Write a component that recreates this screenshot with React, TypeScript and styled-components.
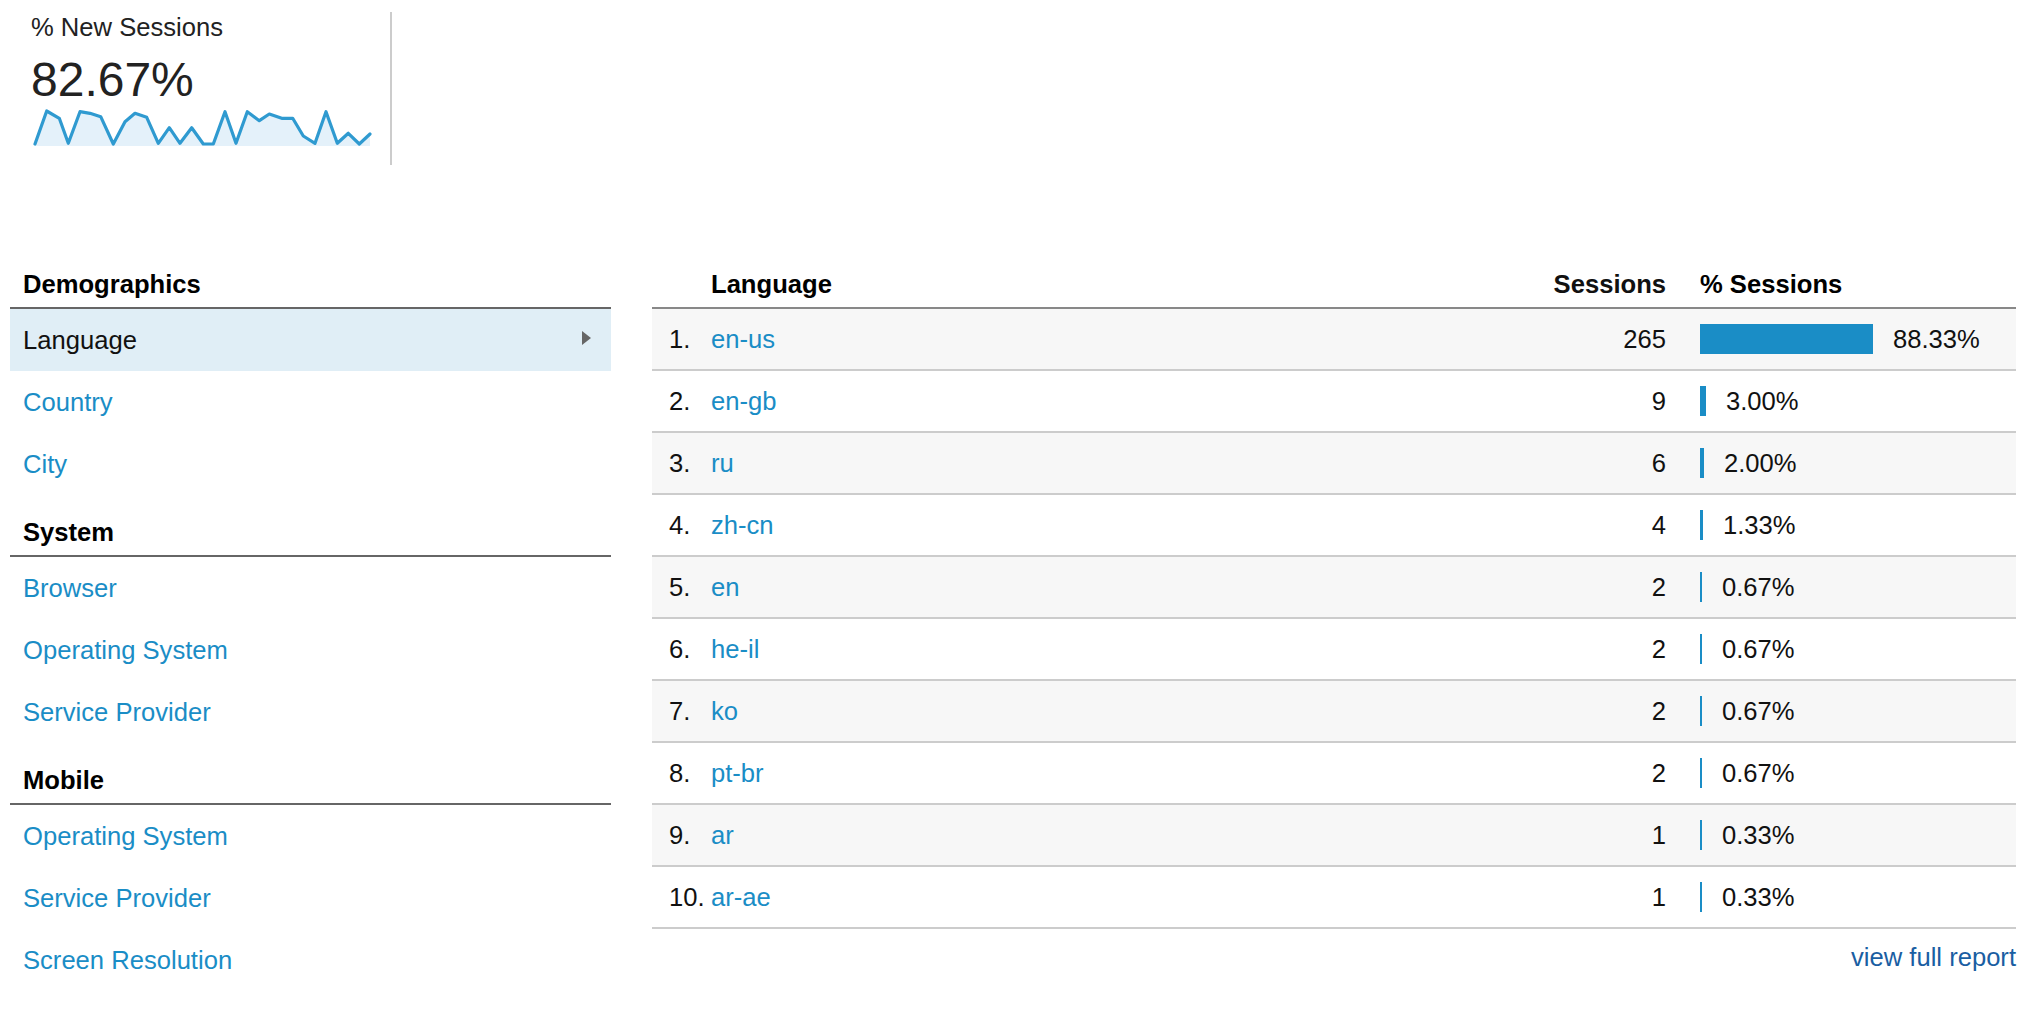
import React from "react";
import styled, { createGlobalStyle } from "styled-components";

const GlobalStyle = createGlobalStyle`
  html, body {
    margin: 0;
    padding: 0;
    background: #ffffff;
  }
  body {
    font-family: "Liberation Sans", Arial, sans-serif;
    font-size: 25.6px;
    color: #222222;
  }
  * { box-sizing: border-box; }
`;

const Page = styled.div`
  width: 2030px;
  min-height: 1018px;
`;

const MetricCard = styled.div`
  width: 392px;
  margin-top: 12px;
  padding: 0 0 17px 31px;
  border-right: 2px solid #cccccc;
`;

const MetricTitle = styled.div`
  font-size: 25.6px;
  line-height: 30px;
  color: #222222;
`;

const MetricValue = styled.div`
  margin-top: 13px;
  font-size: 48px;
  line-height: 50px;
  color: #222222;
`;

const Spark = styled.svg`
  display: block;
  margin: 3px 0 0 2px;
`;

const Main = styled.div`
  display: flex;
  align-items: flex-start;
  gap: 41px;
  margin-top: 82px;
  padding-left: 10px;
`;

const SidePanel = styled.div`
  flex: 0 0 601px;
  width: 601px;
`;

const SectionHeader = styled.div`
  padding: 22px 0 8px 13px;
  line-height: 30px;
  font-weight: bold;
  color: #000000;
  border-bottom: 2px solid #666666;
`;

const NavRow = styled.div<{ $active?: boolean }>`
  display: flex;
  align-items: center;
  justify-content: space-between;
  height: 62px;
  padding: 0 20px 1px 13px;
  line-height: 30px;
  background: ${(p) => (p.$active ? "#e0eef6" : "transparent")};
  color: ${(p) => (p.$active ? "#111111" : "#1a8dc6")};
  cursor: pointer;
`;

const Caret = styled.span`
  width: 0;
  height: 0;
  border-left: 9px solid #666666;
  border-top: 7.5px solid transparent;
  border-bottom: 7.5px solid transparent;
  margin-top: -4px;
`;

const TableWrap = styled.div`
  flex: 0 0 1364px;
  width: 1364px;
`;

const GridRow = styled.div<{ $shade?: boolean }>`
  display: grid;
  grid-template-columns: 42px 1fr 150px 316px;
  align-items: center;
  padding-left: 17px;
  line-height: 30px;
  background: ${(p) => (p.$shade ? "#f7f7f7" : "#ffffff")};
`;

const HeadRow = styled(GridRow)`
  padding-top: 22px;
  padding-bottom: 8px;
  font-weight: bold;
  color: #000000;
  border-bottom: 2px solid #888888;
`;

const BodyRow = styled(GridRow)`
  height: 62px;
  border-bottom: 2px solid #cccccc;
`;

const Rank = styled.span`
  color: #111111;
`;

const LangLink = styled.a`
  color: #1a8dc6;
  text-decoration: none;
`;

const NumCell = styled.div`
  text-align: right;
  padding-right: 34px;
  color: #111111;
`;

const PctCell = styled.div`
  display: flex;
  align-items: center;
  gap: 20px;
  color: #111111;
`;

const Bar = styled.span`
  display: block;
  height: 30px;
  background: #1a8dc6;
`;

const Footer = styled.div`
  display: flex;
  justify-content: flex-end;
  margin-top: 13px;
  line-height: 30px;
`;

const ReportLink = styled.a`
  color: #1a5ea2;
  text-decoration: none;
`;

const sections = [
  { title: "Demographics", items: ["Language", "Country", "City"], active: 0 },
  { title: "System", items: ["Browser", "Operating System", "Service Provider"], active: -1 },
  { title: "Mobile", items: ["Operating System", "Service Provider", "Screen Resolution"], active: -1 },
];

const rows = [
  { lang: "en-us", sessions: 265, pct: 88.33 },
  { lang: "en-gb", sessions: 9, pct: 3.0 },
  { lang: "ru", sessions: 6, pct: 2.0 },
  { lang: "zh-cn", sessions: 4, pct: 1.33 },
  { lang: "en", sessions: 2, pct: 0.67 },
  { lang: "he-il", sessions: 2, pct: 0.67 },
  { lang: "ko", sessions: 2, pct: 0.67 },
  { lang: "pt-br", sessions: 2, pct: 0.67 },
  { lang: "ar", sessions: 1, pct: 0.33 },
  { lang: "ar-ae", sessions: 1, pct: 0.33 },
];

const sparkPts: [number, number][] = [
  [2, 36], [13.7, 3], [26.3, 10.3], [35.3, 35.3], [47, 3.7], [57, 5.3], [67.7, 8.7],
  [80.3, 36], [92, 13.7], [102, 5.3], [113.7, 9.3], [125.3, 35.3], [136.3, 19.7],
  [147, 35.3], [158.7, 19.7], [170.3, 36], [180.3, 36], [192, 3.7], [203, 35.3],
  [214.3, 3.7], [226.3, 12.7], [236.3, 6], [248.7, 10.3], [259.7, 10.3], [270.3, 28],
  [282, 35.3], [293, 3.7], [304.3, 35.3], [315.3, 25.3], [326.3, 36], [337, 26],
];

const Sparkline: React.FC = () => {
  const line = sparkPts.map((p) => `${p[0]},${p[1]}`).join(" ");
  const area = `2,38 ${line} 337,38`;
  return (
    <Spark width="340" height="40" viewBox="0 0 340 40">
      <polygon points={area} fill="#e4f1fa" />
      <polyline
        points={line}
        fill="none"
        stroke="#2f9ad0"
        strokeWidth="3.2"
        strokeLinejoin="round"
        strokeLinecap="round"
      />
    </Spark>
  );
};

const maxPct = 88.33;
const maxBar = 173;

export default function App() {
  return (
    <Page>
      <GlobalStyle />
      <MetricCard>
        <MetricTitle>% New Sessions</MetricTitle>
        <MetricValue>82.67%</MetricValue>
        <Sparkline />
      </MetricCard>

      <Main>
        <SidePanel>
          {sections.map((s) => (
            <div key={s.title}>
              <SectionHeader>{s.title}</SectionHeader>
              {s.items.map((it, i) => (
                <NavRow key={it} $active={i === s.active}>
                  <span>{it}</span>
                  {i === s.active && <Caret />}
                </NavRow>
              ))}
            </div>
          ))}
        </SidePanel>

        <TableWrap>
          <HeadRow>
            <span />
            <span>Language</span>
            <NumCell>Sessions</NumCell>
            <span>% Sessions</span>
          </HeadRow>
          {rows.map((r, i) => (
            <BodyRow key={r.lang} $shade={i % 2 === 0}>
              <Rank>{i + 1}.</Rank>
              <LangLink href="#">{r.lang}</LangLink>
              <NumCell>{r.sessions}</NumCell>
              <PctCell>
                <Bar style={{ width: `${Math.max(2, Math.round((r.pct / maxPct) * maxBar))}px` }} />
                <span>{r.pct.toFixed(2)}%</span>
              </PctCell>
            </BodyRow>
          ))}
          <Footer>
            <ReportLink href="#">view full report</ReportLink>
          </Footer>
        </TableWrap>
      </Main>
    </Page>
  );
}
